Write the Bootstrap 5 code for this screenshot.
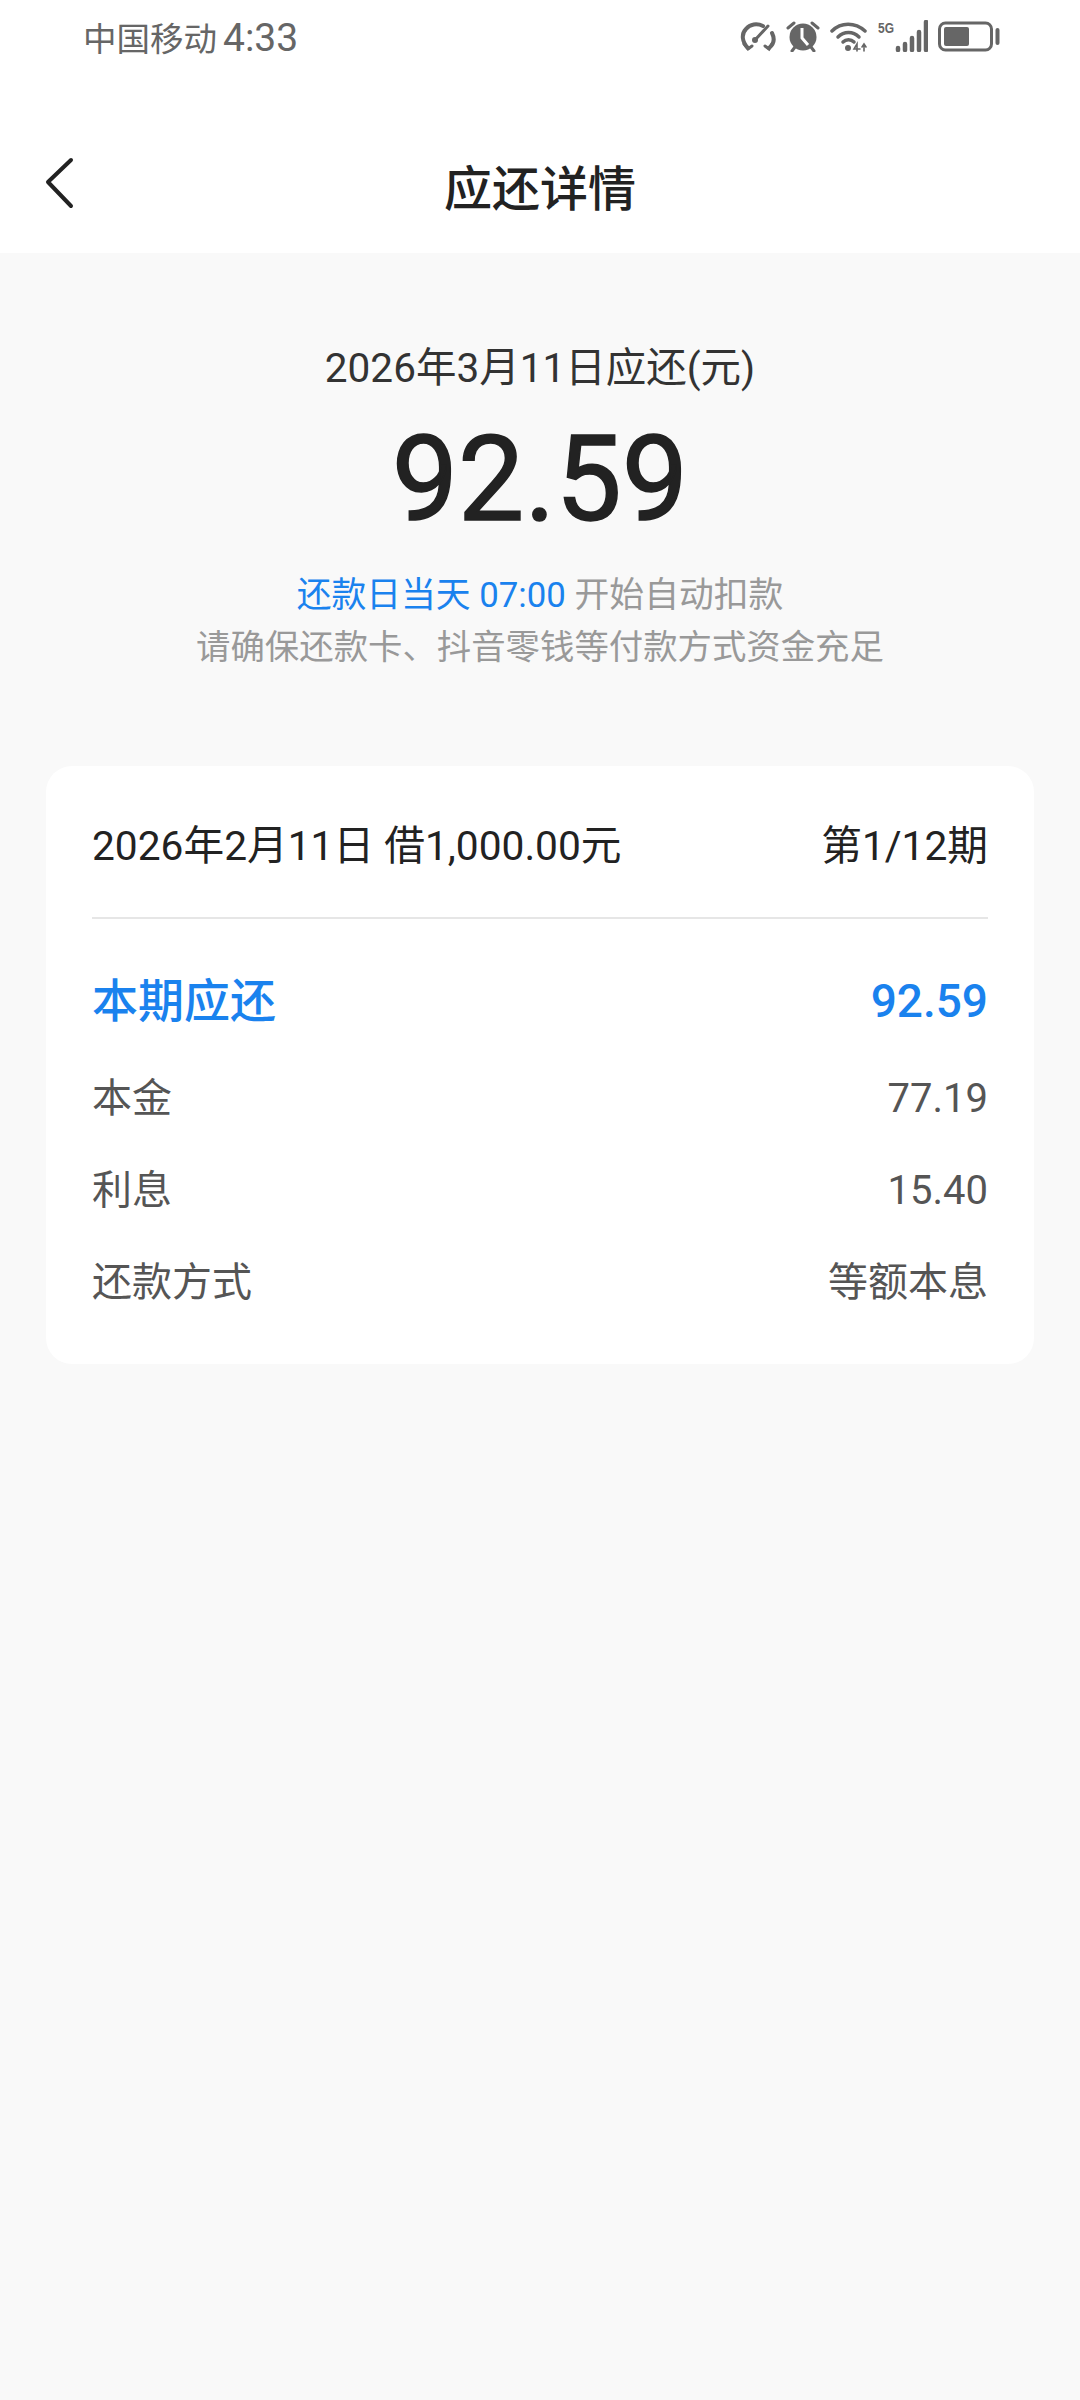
<!DOCTYPE html>
<html lang="zh-CN">
<head>
  <meta charset="UTF-8" />
  <meta name="viewport" content="width=device-width, initial-scale=1.0"/>
  <title>应还详情</title>
  <link href="https://cdn.jsdelivr.net/npm/bootstrap@5.3.3/dist/css/bootstrap.min.css" rel="stylesheet" />
  <style>
    body {
      font-family: Roboto, "Noto Sans CJK SC", sans-serif;
      background: #f9f9f9;
      color: #222;
    }
    .phone-top { background: #fff; height: 253px; }
    .status-row { height: 76px; padding: 0 80px 0 83px; color: #666; }
    .carrier { font-size: 33.5px; line-height: 1; }
    .carrier-time { font-size: 39px; margin-left: 6px; }
    .status-icons { gap: 10px; margin-bottom: 4px; }
    .status-icons svg { display: block; fill: none; stroke: #666; }
    .title-row {
      display: grid;
      grid-template-columns: 1fr auto 1fr;
      align-items: center;
      height: 100px;
      margin-top: 64px;
      padding: 0 45px;
    }
    .back-icon { margin-top: -14px; }
    .page-title { font-size: 48px; font-weight: 500; line-height: 1; margin: 0; color: #222; }
    .summary { padding-top: 90px; }
    .due-date { font-size: 40.5px; line-height: 50px; color: #333; }
    .due-amount { font-size: 118px; line-height: 140px; font-weight: 400; margin-top: 17px; color: #222; -webkit-text-stroke: 1.5px #222; }
    .note { font-size: 34.4px; line-height: 52px; color: #999; }
    .note-first { font-size: 34.8px; margin-top: 19px; }
    .note-blue { color: #1a82ee; }
    .loan-card {
      margin: 93px 46px 0;
      border-radius: 26px;
      background: #fff;
      height: 598px;
      padding: 0 46px;
    }
    .loan-head { height: 153px; padding-top: 10px; font-size: 40.7px; color: #222; border-bottom: 2px solid #e6e6e6; }
    .row-due { font-size: 46px; font-weight: 500; color: #1a82ee; height: 92px; margin-top: 36px; margin-bottom: 6px; }
    .row-item { font-size: 40px; color: #555; height: 92px; }
    .row-due, .row-item, .loan-head { line-height: 1; }
  </style>
</head>
<body class="min-vh-100">
  <!-- TOPO -->
  <div class="phone-top">
    <div class="status-row d-flex align-items-center justify-content-between">
      <div class="carrier">中国移动<span class="carrier-time">4:33</span></div>
      <div class="status-icons d-flex align-items-center">
        <svg width="36" height="32" viewBox="0 0 36 32" stroke-width="4" stroke-linecap="round">
          <path d="M8 28C2 22 1 14 6 9c4-5 11-6 17-3"/>
          <path d="M32 13c3 6 2 11-3 15"/>
          <path d="M4 24l4 5 4-3M25 26l4 3 3-5" stroke-width="3"/>
          <path d="M15 20L28 6" stroke-width="3"/>
          <circle cx="15" cy="20" r="3" fill="#666" stroke="none"/>
        </svg>
        <svg width="34" height="32" viewBox="0 0 34 32">
          <circle cx="17" cy="17" r="13.5" fill="#666" stroke="none"/>
          <path d="M16 8v10l6 7" stroke="#fff" stroke-width="3"/>
          <path d="M2 8l6-5M32 8l-6-5M6 31l3-4M28 31l-3-4" stroke-width="3" stroke-linecap="round"/>
        </svg>
        <svg width="38" height="32" viewBox="0 0 38 32" stroke-width="3.5" stroke-linecap="round">
          <path d="M2 11C11 2 25 2 35 11"/>
          <path d="M8 17c6-6 15-6 21 0"/>
          <path d="M13 22c3-3 8-3 11 0"/>
          <circle cx="18" cy="28" r="3" fill="#666" stroke="none"/>
          <path d="M27 31v-7l-3 5h6M34 31v-7M32 27l2-3 2 3" stroke-width="1.6"/>
        </svg>
        <svg width="50" height="32" viewBox="0 0 50 32">
          <text x="0" y="13" font-family="'Liberation Sans', sans-serif" font-size="15" font-weight="700" fill="#666" stroke="none" textLength="16" lengthAdjust="spacingAndGlyphs">5G</text>
          <path d="M20 28v2M27 24v6M34 18v12M41 12v18M48 2v28" stroke-width="4.5" stroke-linecap="round"/>
        </svg>
        <svg width="62" height="32" viewBox="0 0 62 32">
          <rect x="1.5" y="3" width="52" height="27" rx="6" stroke-width="3"/>
          <rect x="6" y="7" width="25" height="19" rx="2" fill="#666" stroke="none"/>
          <path d="M59.5 10v13" stroke-width="4" stroke-linecap="round"/>
        </svg>
      </div>
    </div>
    <div class="title-row">
      <svg class="back-icon" width="32" height="52" viewBox="0 0 32 52" fill="none" stroke="#222" stroke-width="4" stroke-linecap="round" stroke-linejoin="round">
        <path d="M26 3L3 25l23 24"/>
      </svg>
      <h1 class="page-title">应还详情</h1>
      <span></span>
    </div>
  </div>

  <!-- RESUMO -->
  <div class="summary text-center">
    <div class="due-date">2026年3月11日应还(元)</div>
    <div class="due-amount">92.59</div>
    <div class="note note-first"><span class="note-blue">还款日当天 07:00</span> 开始自动扣款</div>
    <div class="note">请确保还款卡、抖音零钱等付款方式资金充足</div>
  </div>

  <!-- CARTAO -->
  <div class="loan-card">
    <div class="loan-head d-flex align-items-center justify-content-between">
      <span>2026年2月11日 借1,000.00元</span>
      <span>第1/12期</span>
    </div>
    <div class="row-due d-flex align-items-center justify-content-between">
      <span>本期应还</span><span>92.59</span>
    </div>
    <div class="row-item d-flex align-items-center justify-content-between">
      <span>本金</span><span>77.19</span>
    </div>
    <div class="row-item d-flex align-items-center justify-content-between">
      <span>利息</span><span>15.40</span>
    </div>
    <div class="row-item d-flex align-items-center justify-content-between">
      <span>还款方式</span><span>等额本息</span>
    </div>
  </div>

  <script src="https://cdn.jsdelivr.net/npm/bootstrap@5.3.3/dist/js/bootstrap.bundle.min.js"></script>
</body>
</html>
